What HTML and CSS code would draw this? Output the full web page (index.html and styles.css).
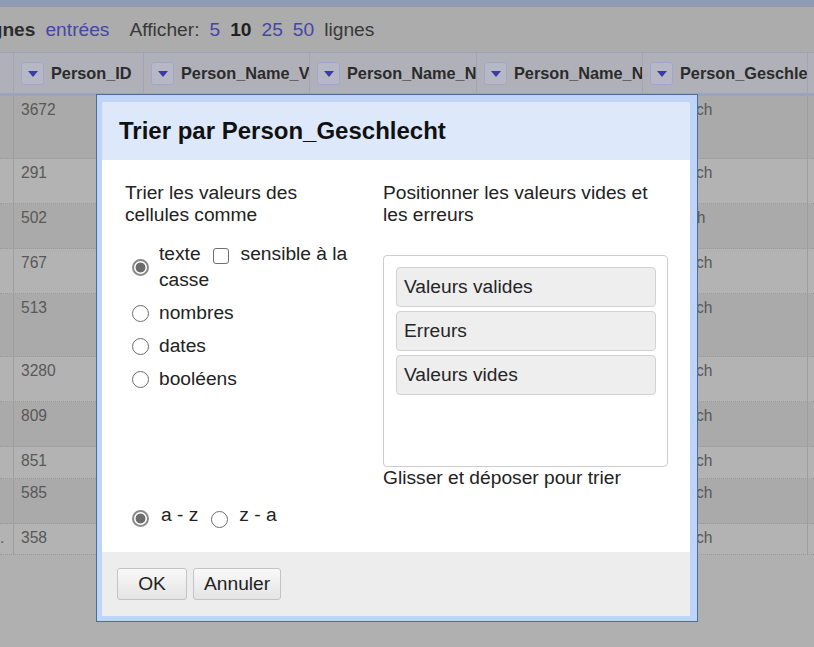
FILE: index.html
```html
<!DOCTYPE html>
<html lang="fr">
<head>
<meta charset="utf-8">
<title>Trier par Person_Geschlecht</title>
<link rel="stylesheet" href="styles.css">
</head>
<body>
<div class="page">
  <div class="topbar"></div>
  <div class="toolbar">
    <span class="tb-strong tb-cut">lignes</span>
    <a class="tb-link tb-entries">entrées</a>
    <span class="tb-label tb-show">Afficher:</span>
    <a class="tb-link tb-size">5</a>
    <span class="tb-current tb-size">10</span>
    <a class="tb-link tb-size">25</a>
    <a class="tb-link tb-size">50</a>
    <span class="tb-label tb-size">lignes</span>
  </div>

  <div class="table">
    <div class="thead">
      <div class="th"></div>
      <div class="th"><span class="dd"></span><span class="th-label">Person_ID</span></div>
      <div class="th"><span class="dd"></span><span class="th-label">Person_Name_Vorname</span></div>
      <div class="th"><span class="dd"></span><span class="th-label">Person_Name_Nachname</span></div>
      <div class="th"><span class="dd"></span><span class="th-label">Person_Name_Namenszusatz</span></div>
      <div class="th"><span class="dd"></span><span class="th-label">Person_Geschlecht</span></div>
      <div class="th"></div>
    </div>
    <div class="tr odd tall"><div class="td"></div><div class="td">3672</div><div class="td"></div><div class="td"></div><div class="td"></div><div class="td">männlich</div><div class="td"></div></div>
    <div class="tr even"><div class="td"></div><div class="td">291</div><div class="td"></div><div class="td"></div><div class="td"></div><div class="td">männlich</div><div class="td"></div></div>
    <div class="tr odd"><div class="td"></div><div class="td">502</div><div class="td"></div><div class="td"></div><div class="td"></div><div class="td">weiblich</div><div class="td"></div></div>
    <div class="tr even"><div class="td"></div><div class="td">767</div><div class="td"></div><div class="td"></div><div class="td"></div><div class="td">männlich</div><div class="td"></div></div>
    <div class="tr odd tall"><div class="td"></div><div class="td">513</div><div class="td"></div><div class="td"></div><div class="td"></div><div class="td">männlich</div><div class="td"></div></div>
    <div class="tr even"><div class="td"></div><div class="td">3280</div><div class="td"></div><div class="td"></div><div class="td"></div><div class="td">männlich</div><div class="td"></div></div>
    <div class="tr odd"><div class="td"></div><div class="td">809</div><div class="td"></div><div class="td"></div><div class="td"></div><div class="td">männlich</div><div class="td"></div></div>
    <div class="tr even short"><div class="td"></div><div class="td">851</div><div class="td"></div><div class="td"></div><div class="td"></div><div class="td">männlich</div><div class="td"></div></div>
    <div class="tr odd"><div class="td"></div><div class="td">585</div><div class="td"></div><div class="td"></div><div class="td"></div><div class="td">männlich</div><div class="td"></div></div>
    <div class="tr even shortest"><div class="td td-dot">.</div><div class="td">358</div><div class="td"></div><div class="td"></div><div class="td"></div><div class="td">männlich</div><div class="td"></div></div>
  </div>
</div>

<div class="modal">
  <div class="modal-head">Trier par Person_Geschlecht</div>
  <div class="modal-body">
    <div class="col-left">
      <div class="heading heading-left">Trier les valeurs des cellules comme</div>
      <div class="choices">
        <div class="choice choice-first">
          <span class="radio checked"></span>
          <span class="choice-label label-tall">texte<span class="checkbox"></span>sensible à la casse</span>
        </div>
        <div class="choice">
          <span class="radio"></span>
          <span class="choice-label">nombres</span>
        </div>
        <div class="choice">
          <span class="radio"></span>
          <span class="choice-label">dates</span>
        </div>
        <div class="choice">
          <span class="radio"></span>
          <span class="choice-label">booléens</span>
        </div>
      </div>
      <div class="order">
        <span class="radio checked order-radio"></span>
        <span class="order-label">a - z</span>
        <span class="radio order-radio order-second"></span>
        <span class="order-label order-label-second">z - a</span>
      </div>
    </div>
    <div class="col-right">
      <div class="heading">Positionner les valeurs vides et les erreurs</div>
      <div class="sortbox">
        <div class="sort-item">Valeurs valides</div>
        <div class="sort-item">Erreurs</div>
        <div class="sort-item">Valeurs vides</div>
      </div>
      <div class="hint">Glisser et déposer pour trier</div>
    </div>
  </div>
  <div class="modal-foot">
    <button class="btn">OK</button>
    <button class="btn">Annuler</button>
  </div>
</div>
</body>
</html>
```

FILE: styles.css
```css
html, body {
  margin: 0;
  padding: 0;
}

body {
  width: 814px;
  height: 647px;
  overflow: hidden;
  background: #b0b0b0;
  font-family: "Liberation Sans", Arial, sans-serif;
  position: relative;
}

.page {
  width: 814px;
  overflow: hidden;
}

.topbar {
  height: 7px;
  background: #8f9ab5;
}

.toolbar {
  height: 45px;
  background: #acacac;
  display: flex;
  align-items: center;
  font-size: 19.2px;
  white-space: nowrap;
  color: #383838;
}

.tb-strong {
  font-weight: bold;
  color: #2c2c2c;
}

.tb-cut {
  margin-left: -20px;
}

.tb-link {
  color: #4646a6;
}

.tb-entries {
  margin-left: 10px;
}

.tb-show {
  margin-left: 20px;
}

.tb-size {
  margin-left: 10px;
}

.tb-current {
  font-weight: bold;
  color: #222;
}

.table {
  width: 814px;
}

.thead,
.tr {
  display: grid;
  grid-template-columns: 14px 130px 166px 167px 166px 165px 1fr;
}

.thead {
  height: 44px;
  box-sizing: border-box;
  border-top: 1px solid #9fa4b6;
  border-bottom: 3px solid #9aa4bf;
  background: #b0b1b8;
}

.th {
  box-sizing: border-box;
  border-right: 1px solid #a1a5b6;
  display: flex;
  align-items: center;
  padding-left: 7px;
  overflow: hidden;
  white-space: nowrap;
}

.dd {
  flex: none;
  width: 23px;
  height: 23px;
  box-sizing: border-box;
  border: 1px solid #a2a6cc;
  border-radius: 3px;
  background: #b6b8c6;
  display: flex;
  align-items: center;
  justify-content: center;
}

.dd::after {
  content: "";
  width: 0;
  height: 0;
  margin-top: 1px;
  border-left: 5px solid transparent;
  border-right: 5px solid transparent;
  border-top: 6px solid #3a3aa8;
}

.th-label {
  margin-left: 7px;
  font-weight: bold;
  font-size: 16.3px;
  color: #2b2b2b;
}

.tr {
  height: 45px;
  box-sizing: border-box;
  border-bottom: 1px dotted #9a9a9a;
}

.tr.tall {
  height: 63px;
}

.tr.short {
  height: 32px;
}

.tr.shortest {
  height: 31px;
}

.tr.odd {
  background: #aaaaaa;
}

.tr.even {
  background: #b3b3b3;
}

.td {
  box-sizing: border-box;
  border-right: 1px solid #9e9e9e;
  padding: 5px 0 0 7px;
  font-size: 15.6px;
  line-height: 18px;
  color: #585858;
  overflow: hidden;
  white-space: nowrap;
}

.td-dot {
  padding-left: 0;
  text-indent: 0;
}

/* Modal dialog */
.modal {
  position: absolute;
  left: 96px;
  top: 94px;
  width: 602px;
  height: 528px;
  box-sizing: border-box;
  border: 1px solid #4d6c9b;
  background: #bfd5f8;
  padding: 7px 7px 5px 5px;
  display: flex;
  flex-direction: column;
  color: #222;
  font-size: 19.2px;
}

.modal-head {
  height: 58px;
  flex: none;
  background: #dde9fb;
  display: flex;
  align-items: center;
  padding-left: 17px;
  font-weight: bold;
  font-size: 24px;
  color: #111;
}

.modal-body {
  height: 392px;
  flex: none;
  box-sizing: border-box;
  background: #fff;
  padding: 22px 22px 24px 23px;
  display: grid;
  grid-template-columns: 258px 285px;
  line-height: 22px;
}

.col-left {
  display: flex;
  flex-direction: column;
}

.heading-left {
  max-width: 230px;
}

.choices {
  margin-top: 15px;
  display: flex;
  flex-direction: column;
  gap: 11px;
}

.choice {
  display: flex;
  align-items: center;
}

.choice-first {
  margin-bottom: -2px;
}

.radio {
  flex: none;
  display: inline-block;
  width: 17px;
  height: 17px;
  box-sizing: border-box;
  border-radius: 50%;
  border: 1px solid #6c6c6c;
  background: #fff;
}

.radio.checked {
  border: 2px solid #8a8a8a;
  background: radial-gradient(circle at center, #6c6c6c 0 4.6px, #fff 5.3px);
}

.choices .radio {
  margin-left: 7px;
}

.choice-label {
  margin-left: 10px;
  width: 200px;
}

.label-tall {
  line-height: 26px;
}

.checkbox {
  display: inline-block;
  width: 16px;
  height: 16px;
  box-sizing: border-box;
  border: 1px solid #6f6f6f;
  border-radius: 3px;
  background: #fff;
  vertical-align: -4px;
  margin: 0 12px 0 12px;
}

.order {
  margin-top: auto;
  display: flex;
  align-items: flex-start;
  white-space: nowrap;
}

.order-radio {
  margin-top: 6px;
  margin-left: 7px;
}

.order-second {
  margin-top: 7px;
  margin-left: 13px;
}

.order-label {
  margin-left: 12px;
}

.order-label-second {
  margin-left: 11px;
}

.col-right {
  display: flex;
  flex-direction: column;
}

.sortbox {
  margin-top: 29px;
  height: 212px;
  box-sizing: border-box;
  border: 1px solid #cdcdcd;
  border-radius: 4px;
  padding: 11px 11px 0 12px;
  display: flex;
  flex-direction: column;
  gap: 4px;
}

.sort-item {
  height: 40px;
  box-sizing: border-box;
  border: 1px solid #d2d2d2;
  border-radius: 4px;
  background: #eeeeee;
  padding-left: 7px;
  display: flex;
  align-items: center;
  color: #262626;
}

.hint {
  color: #222;
}

.modal-foot {
  height: 64px;
  flex: none;
  background: #ededed;
  display: flex;
  align-items: center;
  gap: 6px;
  padding-left: 15px;
}

.btn {
  height: 32px;
  min-width: 70px;
  padding: 0 10px;
  box-sizing: border-box;
  border: 1px solid #c3c3c3;
  border-radius: 3px;
  background: linear-gradient(#f9f9f9, #e4e4e4);
  font-family: "Liberation Sans", Arial, sans-serif;
  font-size: 19.2px;
  color: #222;
  line-height: 22px;
}
```
